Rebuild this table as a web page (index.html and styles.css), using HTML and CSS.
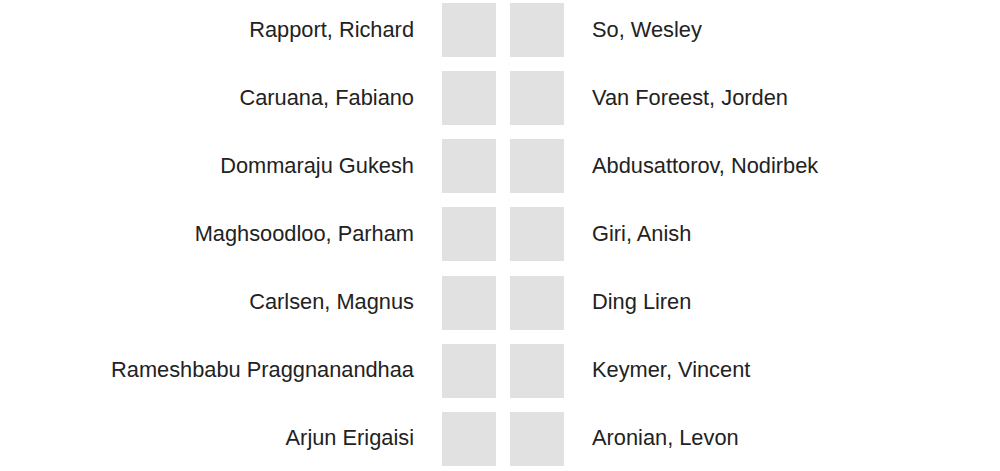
FILE: index.html
```html
<!DOCTYPE html>
<html>
<head>
<meta charset="utf-8">
<link rel="stylesheet" href="styles.css">
</head>
<body>
<div class="pairings">
  <div class="row"><div class="name white">Rapport, Richard</div><div class="sq"></div><div class="sq"></div><div class="name black">So, Wesley</div></div>
  <div class="row"><div class="name white">Caruana, Fabiano</div><div class="sq"></div><div class="sq"></div><div class="name black">Van Foreest, Jorden</div></div>
  <div class="row"><div class="name white">Dommaraju Gukesh</div><div class="sq"></div><div class="sq"></div><div class="name black">Abdusattorov, Nodirbek</div></div>
  <div class="row"><div class="name white">Maghsoodloo, Parham</div><div class="sq"></div><div class="sq"></div><div class="name black">Giri, Anish</div></div>
  <div class="row"><div class="name white">Carlsen, Magnus</div><div class="sq"></div><div class="sq"></div><div class="name black">Ding Liren</div></div>
  <div class="row"><div class="name white">Rameshbabu Praggnanandhaa</div><div class="sq"></div><div class="sq"></div><div class="name black">Keymer, Vincent</div></div>
  <div class="row"><div class="name white">Arjun Erigaisi</div><div class="sq"></div><div class="sq"></div><div class="name black">Aronian, Levon</div></div>
</div>
</body>
</html>
```
FILE: styles.css
```css
html, body {
  margin: 0;
  padding: 0;
  background: #ffffff;
}
body {
  font-family: "Liberation Sans", Arial, sans-serif;
  font-size: 21.8px;
  line-height: 25px;
  color: #222222;
}
.pairings {
  display: flex;
  flex-direction: column;
  gap: 14.17px;
  padding-top: 3px;
}
.row {
  display: flex;
  align-items: center;
  height: 54px;
}
.name {
  padding-bottom: 2px;
}
.name.white {
  width: 414px;
  text-align: right;
  margin-right: 28px;
  white-space: nowrap;
}
.name.black {
  margin-left: 28px;
  white-space: nowrap;
}
.sq {
  width: 54px;
  height: 54px;
  background: #e1e1e1;
}
.sq + .sq {
  margin-left: 14px;
}
```
